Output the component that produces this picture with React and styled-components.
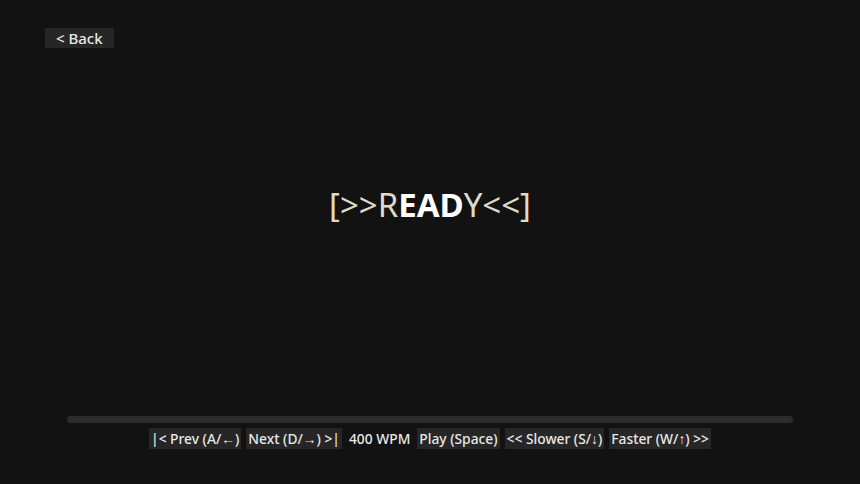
import React from "react";
import styled, { createGlobalStyle } from "styled-components";

const GlobalStyle = createGlobalStyle`
  html, body {
    margin: 0;
    padding: 0;
    background: #121212;
  }
  body {
    font-family: "Noto Sans", "Open Sans", sans-serif;
    color: #e8e8e8;
  }
`;

const Screen = styled.div`
  height: 484px;
  display: flex;
  flex-direction: column;
  box-sizing: border-box;
  padding: 28px 0 35px;
`;

const TopBar = styled.div`
  display: flex;
  padding-left: 45px;
`;

const BackButton = styled.button`
  background: #262626;
  color: #e8e8e8;
  border: none;
  font-family: inherit;
  font-size: 15px;
  font-weight: 500;
  line-height: 20px;
  height: 20px;
  padding: 0 11px;
  cursor: pointer;
`;

const Stage = styled.div`
  flex: 1;
  display: flex;
  align-items: center;
  justify-content: center;
  padding-bottom: 56px;
`;

const Word = styled.div`
  font-size: 33px;
  color: #dedbc6;
  white-space: pre;
`;

const Focus = styled.span`
  font-weight: 700;
  color: #ffffff;
`;

const Footer = styled.div`
  display: flex;
  flex-direction: column;
  align-items: center;
  gap: 5px;
`;

const Progress = styled.div`
  width: 726px;
  height: 7px;
  border-radius: 4px;
  background: #2c2c2c;
`;

const Controls = styled.div`
  display: flex;
  align-items: center;
  gap: 5px;
`;

const Control = styled.button`
  background: #262626;
  color: #e8e8e8;
  border: none;
  font-family: inherit;
  font-size: 13.8px;
  font-weight: 500;
  line-height: 21px;
  height: 21px;
  padding: 0 2px;
  cursor: pointer;
`;

const Speed = styled.span`
  font-size: 13.8px;
  font-weight: 500;
  line-height: 21px;
  padding: 0 2px;
`;

export default function App() {
  return (
    <>
      <GlobalStyle />
      <Screen>
        <TopBar>
          <BackButton>&lt; Back</BackButton>
        </TopBar>
        <Stage>
          <Word>
            [&gt;&gt;R<Focus>EAD</Focus>Y&lt;&lt;]
          </Word>
        </Stage>
        <Footer>
          <Progress />
          <Controls>
            <Control>|&lt; Prev (A/←)</Control>
            <Control>Next (D/→) &gt;|</Control>
            <Speed>400 WPM</Speed>
            <Control>Play (Space)</Control>
            <Control>&lt;&lt; Slower (S/↓)</Control>
            <Control>Faster (W/↑) &gt;&gt;</Control>
          </Controls>
        </Footer>
      </Screen>
    </>
  );
}
